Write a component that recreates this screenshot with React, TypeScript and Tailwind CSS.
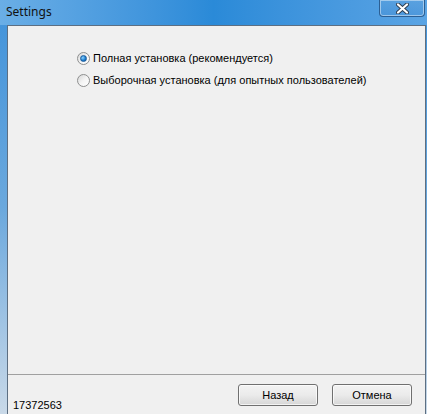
import React, { useState } from "react";

const font = { fontFamily: '"Liberation Sans", Arial, sans-serif' };

const Radio = ({ checked, label, onClick }: { checked: boolean; label: string; onClick: () => void }) => {
  return (
    <div className="flex items-center gap-[3px] h-[13px] cursor-default" onClick={onClick}>
      <span className="relative w-[13px] h-[13px] rounded-full border border-[#8e8f8f] bg-gradient-to-br from-[#d6d6d6] via-[#f4f4f4] to-[#ffffff] flex items-center justify-center">
        {checked && (
          <span className="w-[7px] h-[7px] rounded-full bg-[radial-gradient(circle_at_35%_35%,#8fd4ff_0%,#1e7fd0_55%,#0a4f94_100%)] border border-[#1a5b9c]" />
        )}
      </span>
      <span className="text-[11px] leading-[13px] text-[#000]">{label}</span>
    </div>
  );
};

const App = () => {
  const [mode, setMode] = useState("full");

  return (
    <div
      className="w-[427px] h-[414px] overflow-hidden flex flex-col bg-gradient-to-b from-[#3f92da] via-[#6aa8dd] to-[#c9d9e8]"
      style={font}
    >
      {/* title bar */}
      <div className="relative h-[25px] shrink-0 flex items-start bg-gradient-to-r from-[#6aaee6] via-[#2a8ad8] to-[#5aa4e4]">
        <span
          className="pl-[6px] pt-[4px] text-[12px] leading-[15px] text-[#111]"
          style={{ fontFamily: '"Noto Sans", "Open Sans", sans-serif' }}
        >
          Settings
        </span>
        <div className="absolute right-[2px] top-0 w-[46px] h-[17px] rounded-b-[4px] border border-t-0 border-[#2c5f93] shadow-[inset_0_0_0_1px_rgba(255,255,255,0.45)] bg-gradient-to-b from-[#5c9fda]/40 to-[#3c87cf]/40 flex items-center justify-center">
          <svg width="13" height="11" viewBox="0 0 13 11">
            <path d="M2 1.5 L11 9.5 M11 1.5 L2 9.5" stroke="#2b3b4d" strokeWidth="4" strokeLinecap="round" />
            <path d="M2 1.5 L11 9.5 M11 1.5 L2 9.5" stroke="#ffffff" strokeWidth="2.2" strokeLinecap="round" />
          </svg>
        </div>
      </div>

      {/* body */}
      <div className="flex-1 flex ml-[7px] mr-[1px] min-h-0">
        <div className="flex-1 flex flex-col bg-[#f0f0f0] border border-b-0 border-[#5d6f82]">
          <div className="flex-1 flex flex-col gap-[9px] pt-[26px] pl-[69px]">
            <Radio checked={mode === "full"} label="Полная установка (рекомендуется)" onClick={() => setMode("full")} />
            <Radio
              checked={mode === "custom"}
              label="Выборочная установка (для опытных пользователей)"
              onClick={() => setMode("custom")}
            />
          </div>

          {/* footer */}
          <div className="h-[40px] shrink-0 border-t border-[#a0a0a0] flex justify-between">
            <span className="pl-[5px] pt-[24px] text-[11px] leading-[13px] text-[#000]">17372563</span>
            <div className="flex gap-[14px] pt-[9px] pr-[13px]">
              <button className="w-[80px] h-[22px] rounded-[3px] border border-[#707070] bg-gradient-to-b from-[#f3f3f3] via-[#ebebeb] to-[#d6d6d6] text-[11px] text-[#000] shadow-[inset_0_0_0_1px_rgba(255,255,255,0.7)]">
                Назад
              </button>
              <button className="w-[80px] h-[22px] rounded-[3px] border border-[#707070] bg-gradient-to-b from-[#f3f3f3] via-[#ebebeb] to-[#d6d6d6] text-[11px] text-[#000] shadow-[inset_0_0_0_1px_rgba(255,255,255,0.7)]">
                Отмена
              </button>
            </div>
          </div>
        </div>
      </div>
    </div>
  );
};

export default App;
